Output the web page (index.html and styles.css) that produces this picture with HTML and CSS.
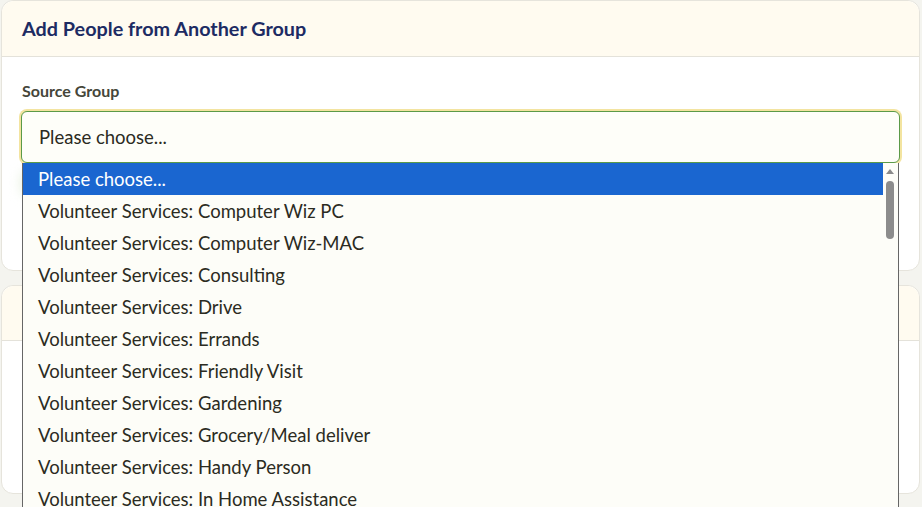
FILE: index.html
```html
<!DOCTYPE html>
<html lang="en">
<head>
    <meta charset="UTF-8">
    <meta name="viewport" content="width=device-width, initial-scale=1.0">
    <title>Add People from Another Group</title>
    <link rel="stylesheet" href="styles.css">
</head>
<body>
    <div class="page">
        <div class="card">
            <div class="card-header">
                <h2>Add People from Another Group</h2>
            </div>
            <div class="card-body">
                <label class="field-label">Source Group</label>
                <div class="select-wrap">
                    <div class="select-box">Please choose...</div>

                    <div class="select-list">
                        <div class="options">
                            <div class="option selected">Please choose...</div>
                            <div class="option">Volunteer Services: Computer Wiz PC</div>
                            <div class="option">Volunteer Services: Computer Wiz-MAC</div>
                            <div class="option">Volunteer Services: Consulting</div>
                            <div class="option">Volunteer Services: Drive</div>
                            <div class="option">Volunteer Services: Errands</div>
                            <div class="option">Volunteer Services: Friendly Visit</div>
                            <div class="option">Volunteer Services: Gardening</div>
                            <div class="option">Volunteer Services: Grocery/Meal deliver</div>
                            <div class="option">Volunteer Services: Handy Person</div>
                            <div class="option">Volunteer Services: In Home Assistance</div>
                        </div>
                        <div class="scrollbar">
                            <div class="arrow-up"></div>
                            <div class="thumb"></div>
                        </div>
                    </div>
                </div>
                <div class="btn-ghost"></div>
            </div>
        </div>

        <div class="card card-second">
            <div class="card-header"></div>
            <div class="card-body"></div>
        </div>
    </div>
</body>
</html>
```

FILE: styles.css
```css
html, body {
    height: 100%;
}

body {
    margin: 0;
    padding: 0;
    background-color: #f4f4ef;
    font-family: Lato, 'Noto Sans', sans-serif;
    color: #2b2b22;
    overflow: hidden;
}

.page {
    padding: 0 2px 0 1px;
    min-height: 507px;
    display: flex;
    flex-direction: column;
    gap: 14px;
}

.card {
    background-color: #ffffff;
    border: 1px solid #e6e4dc;
    border-radius: 12px;
}

.card-header {
    background-color: #fffbf0;
    border-bottom: 1px solid #e4e2da;
    height: 55px;
    border-radius: 12px 12px 0 0;
    padding: 0 20px;
    display: flex;
    align-items: center;
}

.card-header h2 {
    margin: 0 0 1px 0;
    font-size: 19.8px;
    font-weight: 700;
    color: #1d2b63;
}

.card-body {
    padding: 24px 19px 0 19px;
    height: 189px;
    position: relative;
}

.field-label {
    display: block;
    font-size: 16px;
    font-weight: 700;
    color: #45463a;
    margin: 0 0 11px 1px;
}

.select-wrap {
    position: relative;
    z-index: 2;
}

.select-box {
    height: 50px;
    border: 1px solid #5b9a48;
    border-radius: 6px;
    box-shadow: 0 0 0 2px #f3e4a0;
    background-color: #fefef9;
    font-size: 18.5px;
    color: #2b2b22;
    padding: 0 17px;
    display: flex;
    align-items: center;
}

/* open popup of the select */
.select-list {
    position: absolute;
    top: 52px;
    left: 1px;
    right: 1px;
    height: 344px;
    background-color: #fdfdf8;
    border-left: 1px solid #666;
    border-right: 1px solid #666;
    display: flex;
    overflow: hidden;
}

.options {
    flex: 1;
}

.option {
    height: 32px;
    line-height: 32px;
    padding: 0 15px;
    font-size: 18.5px;
    color: #2b2b22;
    white-space: nowrap;
}

.option.selected {
    background-color: #1a66d0;
    color: #ffffff;
}

.scrollbar {
    width: 15px;
    position: relative;
}

.arrow-up {
    position: absolute;
    top: 6px;
    left: 3px;
    width: 0;
    height: 0;
    border-left: 4px solid transparent;
    border-right: 4px solid transparent;
    border-bottom: 5px solid #8a8a8a;
}

.thumb {
    position: absolute;
    top: 18px;
    left: 3px;
    width: 8px;
    height: 58px;
    border-radius: 4px;
    background-color: #8c8c8c;
}

.btn-ghost {
    width: 60px;
    height: 24px;
    margin-top: 8px;
    border-radius: 6px;
    background-color: #e7f0df;
    filter: blur(6px);
}

.card-second .card-header {
    height: 54px;
}

.card-second .card-body {
    height: 152px;
    padding: 0;
}
```
